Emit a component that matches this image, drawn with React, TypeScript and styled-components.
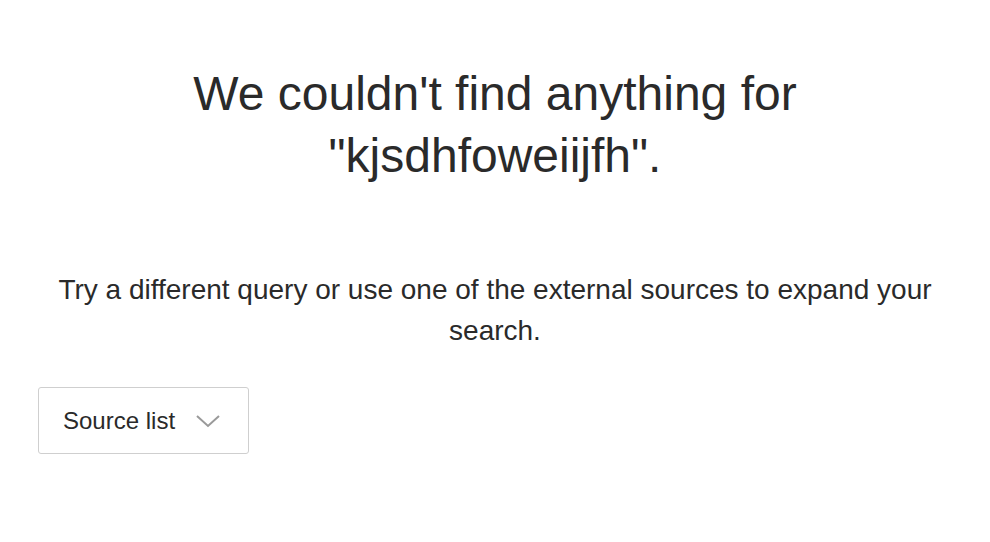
import React from "react";
import styled, { createGlobalStyle } from "styled-components";

const GlobalStyle = createGlobalStyle`
  body {
    margin: 0;
    background: #ffffff;
    font-family: "Liberation Sans", Arial, sans-serif;
    color: #2a2a2a;
  }
`;

const Page = styled.main`
  padding: 63px 38px 40px;
  display: flex;
  flex-direction: column;
`;

const Heading = styled.h1`
  margin: 0 auto;
  max-width: 660px;
  font-size: 48px;
  font-weight: 400;
  line-height: 62px;
  text-align: center;
`;

const Hint = styled.p`
  margin: 82px 0 0;
  font-size: 28px;
  line-height: 41px;
  text-align: center;
`;

const SourceButton = styled.button`
  margin-top: 36px;
  align-self: flex-start;
  display: flex;
  align-items: center;
  gap: 20px;
  width: 211px;
  height: 67px;
  padding: 0 24px;
  background: #fff;
  border: 1.5px solid #cfcfcf;
  border-radius: 3px;
  font-family: inherit;
  font-size: 24px;
  white-space: nowrap;
  color: #2a2a2a;
  cursor: pointer;
`;

const Chevron = () => (
  <svg width="26" height="16" viewBox="0 0 26 16" fill="none">
    <path d="M2 3l11 10 11-10" stroke="#9a9a9a" strokeWidth="2" />
  </svg>
);

const App: React.FC = () => (
  <>
    <GlobalStyle />
    <Page>
      <Heading>We couldn't find anything for "kjsdhfoweiijfh".</Heading>
      <Hint>
        Try a different query or use one of the external sources to expand your
        search.
      </Hint>
      <SourceButton>
        Source list
        <Chevron />
      </SourceButton>
    </Page>
  </>
);

export default App;
